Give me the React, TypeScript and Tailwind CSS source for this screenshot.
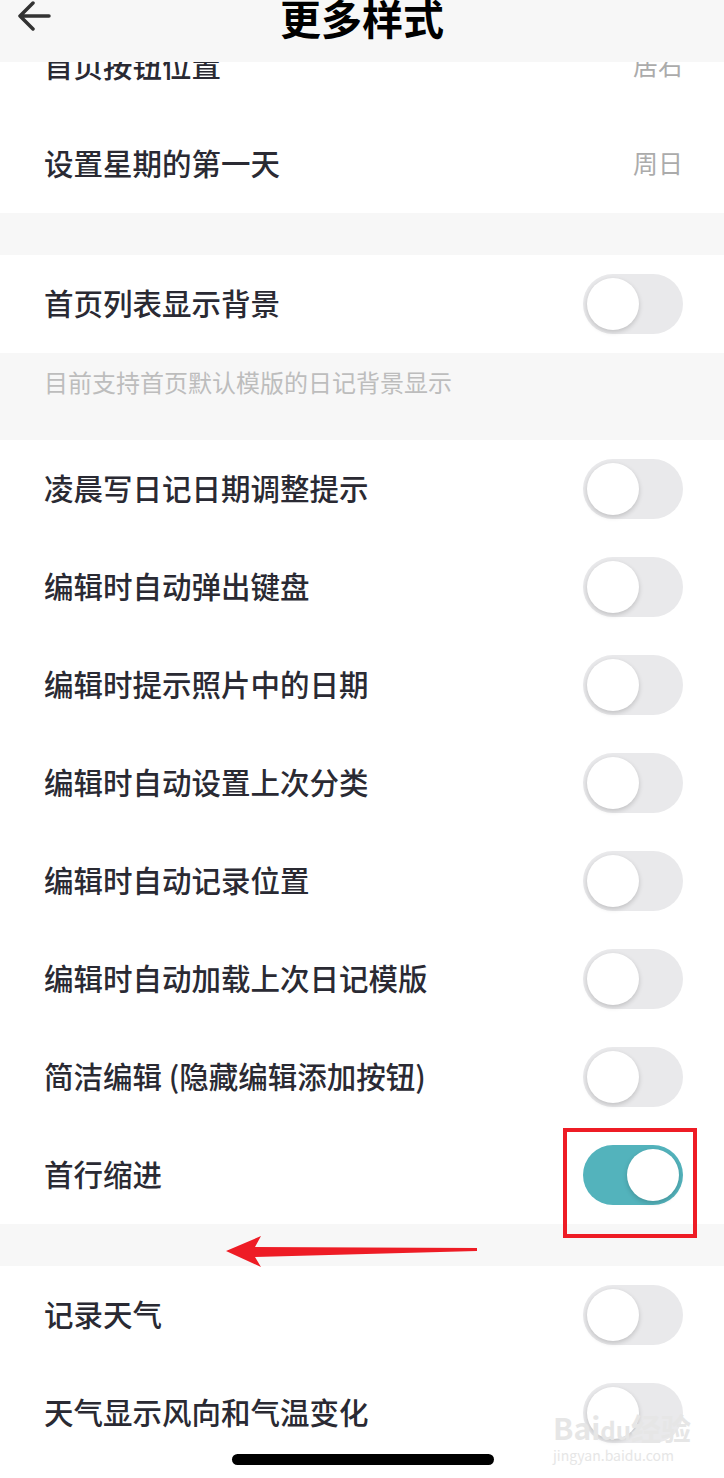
const font = { fontFamily: '"Noto Sans CJK SC", "Noto Sans", sans-serif' };

type Row = { label: string; value?: string; on?: boolean };

const topRows: Row[] = [
  { label: '首页按钮位置', value: '居右' },
  { label: '设置星期的第一天', value: '周日' },
];

const editRows: Row[] = [
  { label: '凌晨写日记日期调整提示' },
  { label: '编辑时自动弹出键盘' },
  { label: '编辑时提示照片中的日期' },
  { label: '编辑时自动设置上次分类' },
  { label: '编辑时自动记录位置' },
  { label: '编辑时自动加载上次日记模版' },
  { label: '简洁编辑 (隐藏编辑添加按钮)' },
  { label: '首行缩进', on: true },
];

const weatherRows: Row[] = [{ label: '记录天气' }, { label: '天气显示风向和气温变化' }];

function Toggle({ on }: { on?: boolean }) {
  return (
    <div
      className={`w-[100px] h-[60px] rounded-full flex items-center px-[4px] ${
        on ? 'bg-[#53b3bc] justify-end' : 'bg-[#e9e9eb] justify-start'
      }`}
    >
      <div className="w-[52px] h-[52px] rounded-full bg-white shadow-[0_2px_5px_rgba(0,0,0,0.18)]" />
    </div>
  );
}

function SettingRow({ row }: { row: Row }) {
  return (
    <div className="h-[98px] flex items-center justify-between pl-[44px] pr-[41px] bg-white">
      <span className="mt-[-4px] text-[29.5px] leading-[30px] font-medium text-[#2a2a33]">{row.label}</span>
      {row.value ? (
        <span className="mt-[-4px] text-[25px] leading-[25px] text-[#ababab]">{row.value}</span>
      ) : (
        <Toggle on={row.on} />
      )}
    </div>
  );
}

export default function App() {
  return (
    <div className="relative w-[724px] h-[1478px] overflow-hidden bg-[#f7f7f7]" style={font}>
      <div className="flex flex-col pt-[17px]">
        <div className="flex flex-col">
          {topRows.map((r) => (
            <SettingRow key={r.label} row={r} />
          ))}
        </div>
        <div className="h-[42px]" />
        <SettingRow row={{ label: '首页列表显示背景' }} />
        <div className="h-[87px] pt-[17px] pl-[44px]">
          <span className="text-[24px] leading-[24px] text-[#bdbdbd]">目前支持首页默认模版的日记背景显示</span>
        </div>
        <div className="flex flex-col">
          {editRows.map((r) => (
            <SettingRow key={r.label} row={r} />
          ))}
        </div>
        <div className="h-[42px]" />
        <div className="flex flex-col bg-white h-[300px]">
          {weatherRows.map((r) => (
            <SettingRow key={r.label} row={r} />
          ))}
        </div>
      </div>

      {/* header over scrolled content */}
      <div className="absolute top-0 left-0 w-full h-[62px] bg-[#f7f7f7] flex items-start justify-center">
        <svg className="absolute left-[16px] top-[1px]" width="36" height="32" viewBox="0 0 36 32" fill="none">
          <path d="M33 15H4M17 2L4 15l13 13" stroke="#333" strokeWidth="3.5" strokeLinecap="round" strokeLinejoin="round" />
        </svg>
        <span className="mt-[-3px] text-[41px] leading-[41px] font-bold text-black">更多样式</span>
      </div>

      {/* annotation box */}
      <div className="absolute left-[563px] top-[1128px] w-[134px] h-[110px] border-[4px] border-[#ee1c25]" />
      <svg className="absolute left-[224px] top-[1234px]" width="256" height="34" viewBox="0 0 256 34">
        <polygon points="2,17 37,2 31,13 253,14 253,17 31,23 37,33" fill="#ee1c25" />
      </svg>

      {/* watermark */}
      <div className="absolute left-[553px] top-[1412px] flex flex-col items-start text-[#e6e6e6]">
        <span className="text-[30px] leading-[30px] font-bold">Bai<span className="text-[24px]">du</span>经验</span>
        <span className="text-[14px] leading-[16px] mt-[2px]">jingyan.baidu.com</span>
      </div>

      {/* home indicator */}
      <div className="absolute left-[232px] top-[1454px] w-[262px] h-[11px] rounded-full bg-black" />
    </div>
  );
}
